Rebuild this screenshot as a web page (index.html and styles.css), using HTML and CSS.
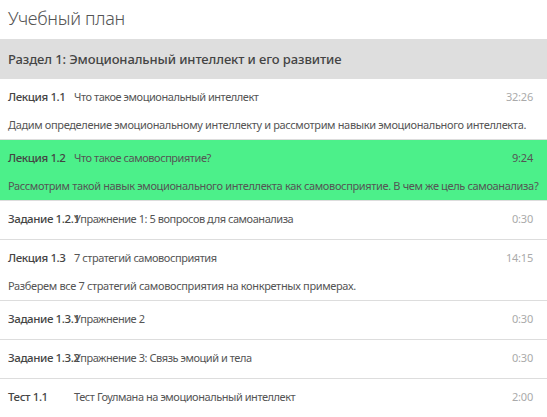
FILE: index.html
```html
<!DOCTYPE html>
<html lang="ru">
<head>
  <meta charset="UTF-8">
  <title>Учебный план</title>
  <link rel="stylesheet" href="styles.css">
</head>
<body>
  <h1 class="page-title">Учебный план</h1>

  <div class="section">
    <div class="section-head">Раздел 1: Эмоциональный интеллект и его развитие</div>

    <div class="item">
      <div class="item-row">
        <span class="item-label">Лекция 1.1</span>
        <span class="item-title">Что такое эмоциональный интеллект</span>
        <span class="item-time">32:26</span>
      </div>
      <div class="item-desc">Дадим определение эмоциональному интеллекту и рассмотрим навыки эмоционального интеллекта.</div>
    </div>

    <div class="item active">
      <div class="item-row">
        <span class="item-label">Лекция 1.2</span>
        <span class="item-title">Что такое самовосприятие?</span>
        <span class="item-time">9:24</span>
      </div>
      <div class="item-desc">Рассмотрим такой навык эмоционального интеллекта как самовосприятие. В чем же цель самоанализа?</div>
    </div>

    <div class="item">
      <div class="item-row">
        <span class="item-label">Задание 1.2.1</span>
        <span class="item-title">Упражнение 1: 5 вопросов для самоанализа</span>
        <span class="item-time">0:30</span>
      </div>
    </div>

    <div class="item">
      <div class="item-row">
        <span class="item-label">Лекция 1.3</span>
        <span class="item-title">7 стратегий самовосприятия</span>
        <span class="item-time">14:15</span>
      </div>
      <div class="item-desc">Разберем все 7 стратегий самовосприятия на конкретных примерах.</div>
    </div>

    <div class="item">
      <div class="item-row">
        <span class="item-label">Задание 1.3.1</span>
        <span class="item-title">Упражнение 2</span>
        <span class="item-time">0:30</span>
      </div>
    </div>

    <div class="item">
      <div class="item-row">
        <span class="item-label">Задание 1.3.2</span>
        <span class="item-title">Упражнение 3: Связь эмоций и тела</span>
        <span class="item-time">0:30</span>
      </div>
    </div>

    <div class="item">
      <div class="item-row">
        <span class="item-label">Тест 1.1</span>
        <span class="item-title">Тест Гоулмана на эмоциональный интеллект</span>
        <span class="item-time">2:00</span>
      </div>
    </div>
  </div>
</body>
</html>
```

FILE: styles.css
```css
body {
  margin: 0;
  font-family: "Noto Sans", sans-serif;
  color: #555;
  background: #fff;
}
.page-title {
  margin: 0;
  padding: 6px 8px 9px;
  font-size: 18px;
  font-weight: 300;
  line-height: 24px;
  letter-spacing: -0.3px;
  color: #555;
}
.section-head {
  background-color: #dedede;
  padding: 0 8px;
  height: 40px;
  line-height: 40px;
  font-size: 13px;
  font-weight: 500;
  letter-spacing: -0.1px;
  color: #444;
}
.item {
  padding: 10px 14px 0 8px;
  border-bottom: 1px solid #ddd;
  height: 28px;
}
.item:has(.item-desc) {
  height: 50px;
}
.item:last-child {
  border-bottom: none;
}
.item.active {
  background-color: #4cf08a;
}
.item-row {
  display: flex;
  align-items: baseline;
  height: 17px;
  font-size: 11px;
  letter-spacing: -0.45px;
}
.item-label {
  width: 66px;
  flex-shrink: 0;
  white-space: nowrap;
  font-weight: 500;
  font-size: 11.5px;
  letter-spacing: -0.4px;
  color: #444;
}
.item-title {
  flex: 1;
  color: #555;
}
.item-time {
  color: #aaa;
  letter-spacing: -0.2px;
}
.item.active .item-time {
  color: #555;
}
.item-desc {
  margin-top: 11px;
  font-size: 11px;
  letter-spacing: -0.35px;
  white-space: nowrap;
  color: #555;
}
```
